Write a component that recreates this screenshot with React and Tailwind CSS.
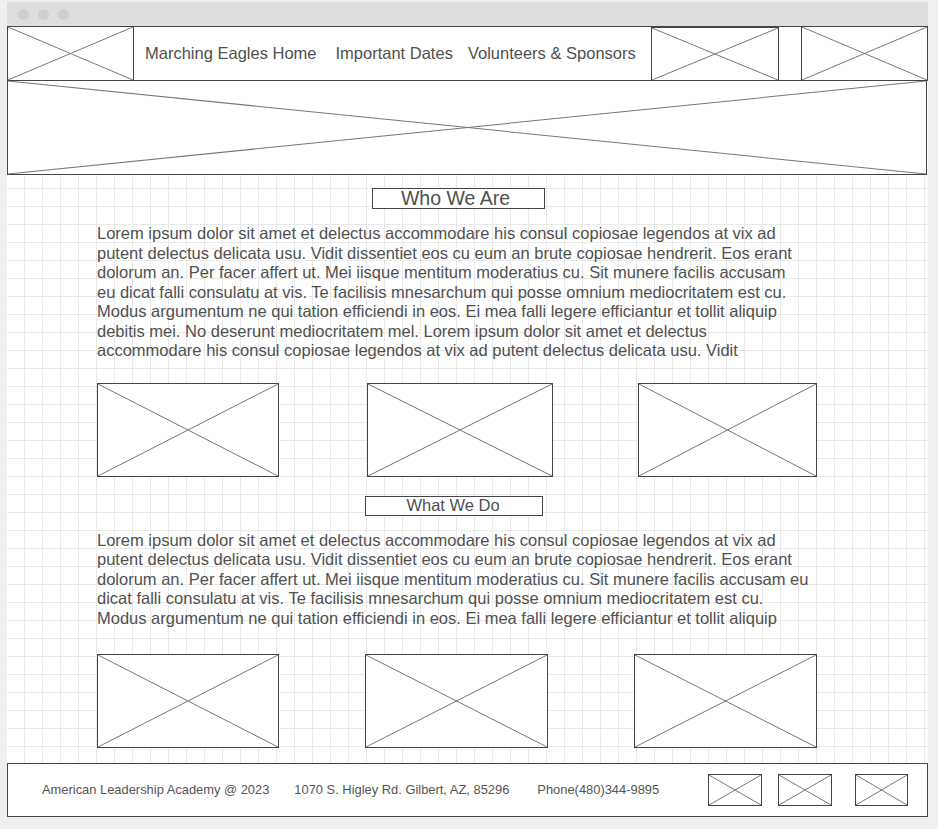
import React from "react";

const font = { fontFamily: '"Liberation Sans", Arial, sans-serif' };

const Cross = ({ className = "" }) => (
  <div className={`relative bg-white border border-[#454545] ${className}`}>
    <svg className="absolute inset-0 w-full h-full" preserveAspectRatio="none" viewBox="0 0 100 100">
      <line x1="0" y1="0" x2="100" y2="100" stroke="#777" strokeWidth="1" vectorEffect="non-scaling-stroke" />
      <line x1="100" y1="0" x2="0" y2="100" stroke="#777" strokeWidth="1" vectorEffect="non-scaling-stroke" />
    </svg>
  </div>
);

const whoLines = [
  "Lorem ipsum dolor sit amet et delectus accommodare his consul copiosae legendos at vix ad",
  "putent delectus delicata usu. Vidit dissentiet eos cu eum an brute copiosae hendrerit. Eos erant",
  "dolorum an. Per facer affert ut. Mei iisque mentitum moderatius cu. Sit munere facilis accusam",
  "eu dicat falli consulatu at vis. Te facilisis mnesarchum qui posse omnium mediocritatem est cu.",
  "Modus argumentum ne qui tation efficiendi in eos. Ei mea falli legere efficiantur et tollit aliquip",
  "debitis mei. No deserunt mediocritatem mel. Lorem ipsum dolor sit amet et delectus",
  "accommodare his consul copiosae legendos at vix ad putent delectus delicata usu. Vidit",
];

const doLines = [
  "Lorem ipsum dolor sit amet et delectus accommodare his consul copiosae legendos at vix ad",
  "putent delectus delicata usu. Vidit dissentiet eos cu eum an brute copiosae hendrerit. Eos erant",
  "dolorum an. Per facer affert ut. Mei iisque mentitum moderatius cu. Sit munere facilis accusam eu",
  "dicat falli consulatu at vis. Te facilisis mnesarchum qui posse omnium mediocritatem est cu.",
  "Modus argumentum ne qui tation efficiendi in eos. Ei mea falli legere efficiantur et tollit aliquip",
];

const Paragraph = ({ lines }) => (
  <div className="ml-[90px] text-[16.5px] leading-[19.5px] text-[#505050] whitespace-nowrap">
    {lines.map((l, i) => (
      <div key={i}>{l}</div>
    ))}
  </div>
);

export default function App() {
  return (
    <div className="min-h-[829px] bg-[#efefef] pt-[2px]" style={font}>
      <div className="ml-[7px] w-[921px]">
        {/* window chrome */}
        <div className="h-[24px] bg-[#dedede] flex items-center gap-[9px] pl-[11px]">
          <span className="w-[11px] h-[11px] rounded-full bg-[#cfcfcf]" />
          <span className="w-[11px] h-[11px] rounded-full bg-[#cfcfcf]" />
          <span className="w-[11px] h-[11px] rounded-full bg-[#cfcfcf]" />
        </div>

        <div className="bg-white bg-[linear-gradient(to_right,#e9e9e9_1px,transparent_1px),linear-gradient(to_bottom,#e9e9e9_1px,transparent_1px)] bg-[size:18px_18px] bg-[position:-1px_0px]">
          {/* nav row */}
          <div className="flex h-[55px] border border-[#454545] bg-white">
            <Cross className="w-[127px] -my-px -ml-px" />
            <nav className="flex items-center text-[16.5px] text-[#505050] ml-[11px]">
              <span>Marching Eagles Home</span>
              <span className="ml-[19px]">Important Dates</span>
              <span className="ml-[15px]">Volunteers &amp; Sponsors</span>
            </nav>
            <Cross className="w-[128px] ml-auto mr-[22px] -mb-px" />
            <Cross className="w-[127px] -my-px -mr-px" />
          </div>

          {/* banner */}
          <Cross className="h-[94px] w-[920px] border-t-0" />

          <main className="pb-[15px]">
            <div className="mt-[13px] ml-[365px] w-[173px] h-[21px] border border-[#454545] bg-white flex items-center justify-center text-[19.5px] leading-none text-[#4f4f4f] pr-[6px]">
              Who We Are
            </div>

            <div className="mt-[15px]">
              <Paragraph lines={whoLines} />
            </div>

            <div className="flex ml-[90px] mt-[22px]">
              <Cross className="w-[182px] h-[94px]" />
              <Cross className="w-[186px] h-[94px] ml-[88px]" />
              <Cross className="w-[179px] h-[94px] ml-[85px]" />
            </div>

            <div className="mt-[19px] ml-[358px] w-[178px] h-[20px] border border-[#454545] bg-white flex items-center justify-center text-[16.5px] leading-none text-[#4f4f4f] pr-[2px]">
              What We Do
            </div>

            <div className="mt-[15px]">
              <Paragraph lines={doLines} />
            </div>

            <div className="flex ml-[90px] mt-[26px]">
              <Cross className="w-[182px] h-[94px]" />
              <Cross className="w-[183px] h-[94px] ml-[86px]" />
              <Cross className="w-[183px] h-[94px] ml-[86px]" />
            </div>
          </main>

          {/* footer */}
          <footer className="h-[54px] border border-[#454545] bg-white flex items-center text-[12.9px] text-[#555]">
            <span className="ml-[34px]">American Leadership Academy @ 2023</span>
            <span className="ml-[25px]">1070 S. Higley Rd. Gilbert, AZ, 85296</span>
            <span className="ml-[28px]">Phone(480)344-9895</span>
            <Cross className="w-[54px] h-[32px] ml-auto" />
            <Cross className="w-[54px] h-[32px] ml-[16px]" />
            <Cross className="w-[53px] h-[32px] ml-[23px] mr-[19px]" />
          </footer>
        </div>
      </div>
    </div>
  );
}
